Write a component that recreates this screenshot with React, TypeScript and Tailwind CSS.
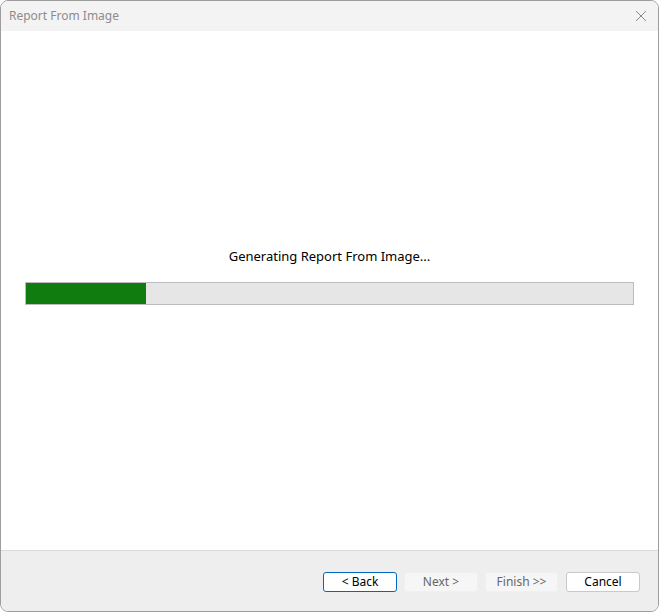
export default function App() {
  return (
    <div className="w-[659px] h-[612px] bg-white" style={{ fontFamily: '"Noto Sans", "Open Sans", sans-serif' }}>
      <div className="w-[659px] h-[612px] flex flex-col border border-[#9d9d9d] rounded-[8px] overflow-hidden bg-white">
        <div className="h-[30px] shrink-0 bg-[#f3f3f3] flex items-center justify-between pl-[8px] pr-[10px]">
          <span className="text-[12px] text-[#8c8c8c]">Report From Image</span>
          <svg width="12" height="12" viewBox="0 0 12 12" className="mr-[1px]">
            <path d="M1 1 L11 11 M11 1 L1 11" stroke="#8a8a8a" strokeWidth="1" />
          </svg>
        </div>
        <div className="flex-1 flex flex-col items-center pt-[216px] px-[24px]">
          <div className="text-[13px] text-black leading-[18px]">Generating Report From Image...</div>
          <div className="mt-[17px] w-full h-[23px] bg-[#e6e6e6] border border-[#bcbcbc] flex">
            <div className="w-[120px] h-full bg-[#107c10]" />
          </div>
        </div>
        <div className="h-[61px] shrink-0 bg-[#eeeeee] border-t border-[#dadada] flex justify-end items-start pt-[21px] pr-[18px]">
          <button className="w-[74px] h-[20px] rounded-[3px] border border-[#0067c0] bg-white text-[12px] text-black leading-none">&lt; Back</button>
          <button className="ml-[7px] w-[74px] h-[20px] rounded-[3px] border border-[#f0f0f0] bg-[#f6f6f6] text-[12px] text-[#666666] leading-none">Next &gt;</button>
          <button className="ml-[7px] w-[73px] h-[20px] rounded-[3px] border border-[#f0f0f0] bg-[#f6f6f6] text-[12px] text-[#666666] leading-none">Finish &gt;&gt;</button>
          <button className="ml-[8px] w-[74px] h-[20px] rounded-[3px] border border-[#c9c9c9] bg-white text-[12px] text-black leading-none">Cancel</button>
        </div>
      </div>
    </div>
  );
}
